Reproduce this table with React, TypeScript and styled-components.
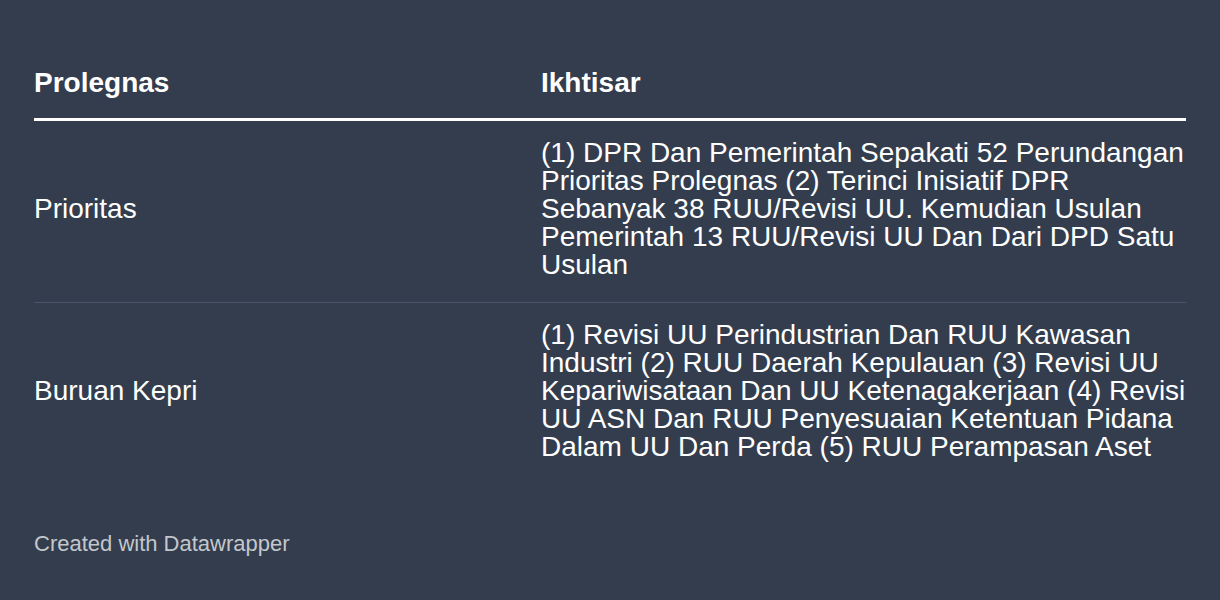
import React from "react";
import styled, { createGlobalStyle } from "styled-components";

const GlobalStyle = createGlobalStyle`
	html, body {
		margin: 0;
		padding: 0;
		background: #333d4d;
	}
	body {
		font-family: "Liberation Sans", Arial, sans-serif;
		color: #ffffff;
	}
`;

const Page = styled.div`
	padding: 69px 34px 0 34px;
	height: 600px;
	box-sizing: border-box;
`;

const Table = styled.table`
	width: 1152px;
	border-collapse: collapse;
	table-layout: fixed;
`;

const HeadCell = styled.th<{ $w?: string }>`
	text-align: left;
	font-size: 28px;
	line-height: 28px;
	font-weight: 700;
	padding: 0 0 21px 0;
	border-bottom: 3px solid #ffffff;
	width: ${(p) => p.$w ?? "auto"};
`;

const Row = styled.tr`
	border-bottom: 1px solid #4b5567;

	&:last-child {
		border-bottom: none;
	}
`;

const Cell = styled.td`
	font-size: 28px;
	line-height: 28px;
	padding: 18px 0 23px 0;
	vertical-align: middle;
	color: #ffffff;
`;

const Footer = styled.div`
	margin-top: 46px;
	font-size: 22px;
	line-height: 28px;
	color: #c3c7cc;
`;

const rows = [
	{
		label: "Prioritas",
		text: "(1) DPR Dan Pemerintah Sepakati 52 Perundangan Prioritas Prolegnas (2) Terinci Inisiatif DPR Sebanyak 38 RUU/Revisi UU. Kemudian Usulan Pemerintah 13 RUU/Revisi UU Dan Dari DPD Satu Usulan",
	},
	{
		label: "Buruan Kepri",
		text: "(1) Revisi UU Perindustrian Dan RUU Kawasan Industri (2) RUU Daerah Kepulauan (3) Revisi UU Kepariwisataan Dan UU Ketenagakerjaan (4) Revisi UU ASN Dan RUU Penyesuaian Ketentuan Pidana Dalam UU Dan Perda (5) RUU Perampasan Aset",
	},
];

const App: React.FC = () => {
	return (
		<Page>
			<GlobalStyle />
			<Table>
				<thead>
					<tr>
						<HeadCell $w="507px">Prolegnas</HeadCell>
						<HeadCell>Ikhtisar</HeadCell>
					</tr>
				</thead>
				<tbody>
					{rows.map((row) => (
						<Row key={row.label}>
							<Cell>{row.label}</Cell>
							<Cell>{row.text}</Cell>
						</Row>
					))}
				</tbody>
			</Table>
			<Footer>Created with Datawrapper</Footer>
		</Page>
	);
};

export default App;
